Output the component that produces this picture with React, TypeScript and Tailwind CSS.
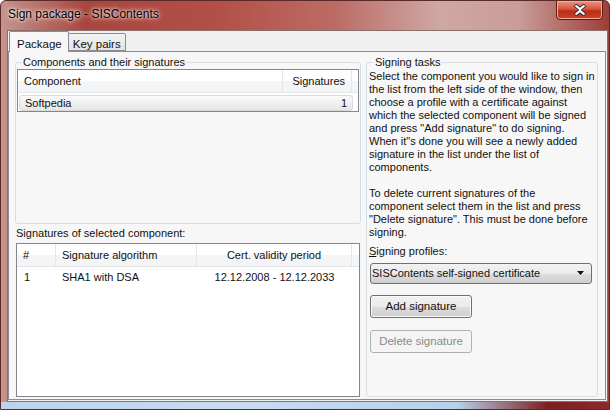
import React from "react";

const ListHeaderCell: React.FC<{ w: string; align?: string; children?: React.ReactNode }> = ({
  w,
  align = "text-left",
  children,
}) => (
  <div className={`${w} ${align} h-full flex items-center px-[6px] border-r border-[#e3e6ea] whitespace-nowrap`}>
    <span className="w-full">{children}</span>
  </div>
);

const WinButton: React.FC<{ disabled?: boolean; children: React.ReactNode }> = ({ disabled, children }) => (
  <button
    disabled={disabled}
    className={
      disabled
        ? "w-[102px] h-[23px] rounded-[3px] border border-[#adb2b5] bg-[#f4f4f4] text-[#8a8a8a] text-[11.5px]"
        : "w-[102px] h-[23px] rounded-[3px] border border-[#707070] bg-[linear-gradient(#f2f2f2_0%,#ebebeb_50%,#dddddd_51%,#cfcfcf_100%)] text-[#111] text-[11.5px] shadow-[inset_0_0_0_1px_#fbfbfb]"
    }
  >
    {children}
  </button>
);

export default function App() {
  const tasks = [
    "Select the component you would like to sign in",
    "the list from the left side of the window, then",
    "choose a profile with a certificate against",
    "which the selected component will be signed",
    'and press "Add signature" to do signing.',
    'When it"s done you will see a newly added',
    "signature in the list under the list of",
    "components.",
    "",
    "To delete current signatures of the",
    "component select them in the list and press",
    '"Delete signature". This must be done before',
    "signing.",
  ];

  return (
    <div className="w-[610px] h-[410px] flex flex-col overflow-hidden font-['Liberation_Sans',Arial,sans-serif] text-[11px] text-[#111] bg-[linear-gradient(90deg,#c4948e_0%,#a8453e_14%,#b24f47_35%,#bb6c65_55%,#cfa7a3_72%,#c99d99_85%,#9d3d38_100%)] rounded-t-[6px] border border-[#5a2a28]">
      {/* title bar */}
      <div className="relative h-[29px] shrink-0 flex items-center pl-[7px] pb-[3px]">
        <span className="text-[12px] text-black [text-shadow:0_0_6px_#ffffff,0_0_3px_#ffffff]">
          Sign package - SISContents
        </span>
        <div className="absolute right-[6px] top-[-1px] w-[47px] h-[20px] rounded-b-[4px] border border-[#5b1a14] bg-[linear-gradient(#eb9580_0%,#d8553a_45%,#bb2e16_55%,#c9442a_100%)] flex items-center justify-center shadow-[inset_0_0_0_1px_#f2b09e]">
          <svg width="14" height="12" viewBox="0 0 14 12">
            <path d="M2 1 L7 5 L12 1 M2 11 L7 7 L12 11" stroke="#2d2d3a" strokeWidth="4" fill="none" />
            <path d="M2.5 1.5 L7 5 L11.5 1.5 M2.5 10.5 L7 7 L11.5 10.5 M7 5 L7 7" stroke="#ffffff" strokeWidth="2.2" fill="none" />
          </svg>
        </div>
      </div>

      {/* client area */}
      <div className="flex-1 flex px-[6px]">
        <div className="flex-1 flex flex-col bg-[#f0f0f0] border border-[#8a6e6c]">
          {/* tabs */}
          <div className="h-[20px] flex items-end pl-[1px] relative z-10">
            <div className="h-[21px] pl-[7px] pr-[6px] pt-[4px] border border-b-0 border-[#898c95] bg-[#f7f7f7] rounded-t-[2px] -mb-[1px] text-[11.5px]">
              Package
            </div>
            <div className="h-[18px] px-[4px] pt-[2px] border border-l-0 border-[#898c95] bg-[linear-gradient(#f3f3f3,#e3e3e3)] rounded-tr-[2px] text-[11.5px]">
              Key pairs
            </div>
          </div>
          {/* panel */}
          <div className="flex-1 flex gap-[5px] mb-[1px] mr-[1px] border border-[#898c95] bg-[#f7f7f7] pl-[6px] pr-[7px] pt-[4px] pb-[2px]">
            {/* left column */}
            <div className="w-[346px] flex flex-col">
              <fieldset className="h-[168px] border border-[#d5dfe5] rounded-[3px] px-[1px] pb-[2px]">
                <legend className="ml-[5px] px-[1px] leading-[13px] text-[11px]">Components and their signatures</legend>
                <div className="h-full bg-white border border-[#828790] flex flex-col">
                  <div className="h-[23px] flex border-b border-[#e5e5e5] bg-[linear-gradient(#ffffff_0%,#ffffff_50%,#f4f5f7_51%,#f3f4f6_100%)]">
                    <ListHeaderCell w="w-[265px]">Component</ListHeaderCell>
                    <ListHeaderCell w="w-[69px]" align="text-right">Signatures</ListHeaderCell>
                    <div className="flex-1" />
                  </div>
                  <div className="mt-[2px] ml-[1px] w-[334px] h-[16px] flex items-center justify-between px-[5px] rounded-[3px] border border-[#d9d9d9] bg-[linear-gradient(#fafafa,#e6e6e6)]">
                    <span>Softpedia</span>
                    <span>1</span>
                  </div>
                </div>
              </fieldset>
              <div className="pl-[1px] pt-[3px] leading-[13px] h-[19px]">Signatures of selected component:</div>
              <div className="flex-1 mx-[1px] bg-white border border-[#828790] flex flex-col">
                <div className="h-[23px] flex border-b border-[#e5e5e5] bg-[linear-gradient(#ffffff_0%,#ffffff_50%,#f4f5f7_51%,#f3f4f6_100%)]">
                  <ListHeaderCell w="w-[39px]">#</ListHeaderCell>
                  <ListHeaderCell w="w-[141px]">Signature algorithm</ListHeaderCell>
                  <ListHeaderCell w="w-[155px]" align="text-center">Cert. validity period</ListHeaderCell>
                  <div className="flex-1" />
                </div>
                <div className="h-[20px] flex items-center">
                  <div className="w-[39px] pl-[7px]">1</div>
                  <div className="w-[141px] pl-[6px]">SHA1 with DSA</div>
                  <div className="w-[155px] text-center">12.12.2008 - 12.12.2033</div>
                </div>
              </div>
            </div>

            {/* right column */}
            <fieldset className="flex-1 border border-[#d5dfe5] rounded-[3px] px-[2px] pb-[2px]">
              <legend className="ml-[5px] px-[1px] leading-[13px] text-[11px]">Signing tasks</legend>
              <div className="leading-[13px] whitespace-nowrap pt-[1px] text-[11px]">
                {tasks.map((t, i) => (
                  <div key={i} className="h-[13px]">
                    {t}
                  </div>
                ))}
              </div>
              <div className="mt-[6px] leading-[13px]">
                <span className="underline">S</span>igning profiles:
              </div>
              <div className="mt-[5px] ml-[1px] w-[222px] h-[21px] rounded-[3px] border border-[#707070] bg-[linear-gradient(#f2f2f2_0%,#ebebeb_50%,#dddddd_51%,#cfcfcf_100%)] flex items-center justify-between pl-[1px] pr-[6px]">
                <span className="whitespace-nowrap">SISContents self-signed certificate</span>
                <svg width="8" height="5" viewBox="0 0 8 5">
                  <path d="M0 0 H7 L3.5 4 Z" fill="#111" />
                </svg>
              </div>
              <div className="mt-[11px] ml-[1px]">
                <WinButton>Add signature</WinButton>
              </div>
              <div className="mt-[12px] ml-[1px]">
                <WinButton disabled>Delete signature</WinButton>
              </div>
            </fieldset>
          </div>
        </div>
      </div>

      {/* bottom frame */}
      <div className="h-[7px] shrink-0 bg-[linear-gradient(90deg,#bcd3ea_0%,#c9dcef_40%,#b8d0ea_75%,#7a1f1f_90%,#8c2a2a_100%)]" />
    </div>
  );
}
